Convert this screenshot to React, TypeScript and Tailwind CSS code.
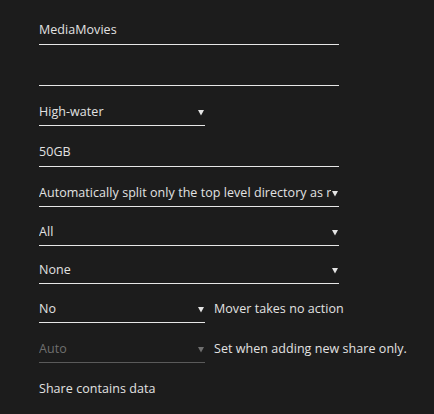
const Caret = ({ dim }: { dim?: boolean }) => (
  <svg width="6" height="7" viewBox="0 0 6 7" className={dim ? "text-[#6f6f6f]" : "text-[#e4e4e4]"}>
    <path d="M0 1h6L3 6.5z" fill="currentColor" />
  </svg>
);

const TextField = ({ value, className = "" }: { value: string; className?: string }) => (
  <div className={`w-[300px] h-[25px] border-b border-[#e6e6e6] pt-[1px] pb-[5px] leading-[18px] ${className}`}>
    {value}
  </div>
);

const SelectField = ({
  value,
  wide,
  dim,
  className = "",
}: {
  value: string;
  wide?: boolean;
  dim?: boolean;
  className?: string;
}) => (
  <div
    className={`${wide ? "w-[300px]" : "w-[166px]"} h-[25px] flex items-center justify-between border-b pb-[2px] pr-[1px] ${
      dim ? "border-[#5a5a5a] text-[#6f6f6f]" : "border-[#e6e6e6]"
    } ${className}`}
  >
    <span className="whitespace-nowrap overflow-hidden leading-[18px]">{value}</span>
    <Caret dim={dim} />
  </div>
);

const App = () => {
  return (
    <main
      className="w-[434px] h-[414px] bg-[#1c1c1c] text-[#e2e2e2] text-[12.5px] tracking-[0.05px] pl-[39px] pt-[20px]"
      style={{ fontFamily: '"Open Sans", "Noto Sans", sans-serif' }}
    >
      <TextField value="MediaMovies" />
      <TextField value="" className="mt-[16px]" />
      <SelectField value="High-water" className="mt-[15px]" />
      <TextField value="50GB" className="mt-[16px]" />
      <SelectField
        value="Automatically split only the top level directory as r"
        wide
        className="mt-[15px]"
      />
      <SelectField value="All" wide className="mt-[14px]" />
      <SelectField value="None" wide className="mt-[13px]" />

      <div className="flex items-end gap-[9px] mt-[14px]">
        <SelectField value="No" />
        <span className="pb-[5px] leading-[18px]">Mover takes no action</span>
      </div>
      <div className="flex items-end gap-[9px] mt-[15px]">
        <SelectField value="Auto" dim />
        <span className="pb-[5px] leading-[18px]">Set when adding new share only.</span>
      </div>

      <div className="mt-[17px] leading-[18px]">Share contains data</div>
    </main>
  );
};

export default App;
